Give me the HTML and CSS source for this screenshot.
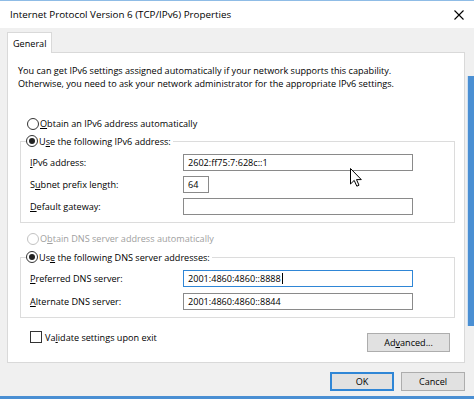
FILE: index.html
```html
<!DOCTYPE html>
<html lang="en">
<head>
    <meta charset="UTF-8">
    <title>Internet Protocol Version 6 (TCP/IPv6) Properties</title>
    <link rel="stylesheet" href="styles.css">
</head>
<body>
    <div class="window">
        <div class="titlebar">
            <span class="title">Internet Protocol Version 6 (TCP/IPv6) Properties</span>
            <svg class="close" width="10" height="10" viewBox="0 0 10 10">
                <path d="M0.5 0.5 L9.5 9.5 M9.5 0.5 L0.5 9.5" stroke="#000" stroke-width="1.1" fill="none"/>
            </svg>
        </div>

        <div class="dialog-body">
            <div class="tabs">
                <div class="tab">General</div>
            </div>

            <div class="panel">
                <p class="intro">
                    You can get IPv6 settings assigned automatically if your network supports this capability.<br>
                    Otherwise, you need to ask your network administrator for the appropriate IPv6 settings.
                </p>

                <div class="option first-option">
                    <span class="radio"></span>
                    <span><u>O</u>btain an IPv6 address automatically</span>
                </div>

                <fieldset class="group group-ip">
                    <legend class="option">
                        <span class="radio checked"></span>
                        <span>U<u>s</u>e the following IPv6 address:</span>
                    </legend>
                    <div class="field-row">
                        <span class="field-label"><u>I</u>Pv6 address:</span>
                        <div class="textbox">2602:ff75:7:628c::1</div>
                    </div>
                    <div class="field-row">
                        <span class="field-label">S<u>u</u>bnet prefix length:</span>
                        <div class="textbox short">64</div>
                    </div>
                    <div class="field-row">
                        <span class="field-label"><u>D</u>efault gateway:</span>
                        <div class="textbox"></div>
                    </div>
                </fieldset>

                <div class="option disabled dns-auto">
                    <span class="radio"></span>
                    <span>O<u>b</u>tain DNS server address automatically</span>
                </div>

                <fieldset class="group group-dns">
                    <legend class="option">
                        <span class="radio checked"></span>
                        <span>Us<u>e</u> the following DNS server addresses:</span>
                    </legend>
                    <div class="field-row">
                        <span class="field-label"><u>P</u>referred DNS server:</span>
                        <div class="textbox focused">2001:4860:4860::8888<span class="caret"></span></div>
                    </div>
                    <div class="field-row">
                        <span class="field-label"><u>A</u>lternate DNS server:</span>
                        <div class="textbox">2001:4860:4860::8844</div>
                    </div>
                </fieldset>

                <div class="panel-footer">
                    <div class="check-option">
                        <span class="checkbox"></span>
                        <span>Va<u>l</u>idate settings upon exit</span>
                    </div>
                    <button class="btn advanced">Ad<u>v</u>anced...</button>
                </div>
            </div>

            <div class="actions">
                <button class="btn default">OK</button>
                <button class="btn">Cancel</button>
            </div>
        </div>

        <!-- edge of the window behind this dialog -->
        <div class="behind-edge"></div>

        <svg class="cursor" width="12" height="19" viewBox="0 0 12 19">
            <path d="M0.5 0.5 L0.5 16 L4.2 12.4 L6.8 18.2 L9 17.2 L6.5 11.6 L11.3 11.6 Z" fill="#fff" stroke="#000" stroke-width="1" stroke-linejoin="miter"/>
        </svg>
    </div>
</body>
</html>
```

FILE: styles.css
```css
:root {
    --dialog-bg: #f0f0f0;
    --panel-border: #d9d9d9;
    --group-border: #dcdcdc;
    --text: #000000;
    --text-disabled: #a0a0a0;
    --input-border: #8a8a8a;
    --focus-blue: #2f86d6;
    --button-bg: #e1e1e1;
    --button-border: #adadad;
    --window-blue: #4a8fd3;
}

* {
    box-sizing: border-box;
}

body {
    margin: 0;
    width: 474px;
    height: 399px;
    overflow: hidden;
    font-family: "Open Sans", "Liberation Sans", sans-serif;
    font-size: 9.1px;
    color: var(--text);
}

u {
    text-decoration: underline;
    text-underline-offset: 1px;
}

.window {
    position: relative;
    height: 399px;
    display: flex;
    flex-direction: column;
    background: var(--dialog-bg);
    border-top: 1px solid #8fbce6;
    border-bottom: 3px solid var(--window-blue);
}

.titlebar {
    height: 27px;
    flex: none;
    background: #ffffff;
    display: flex;
    align-items: center;
    justify-content: space-between;
    padding: 0 10px 0 10px;
}

.title {
    font-size: 9.8px;
}

.dialog-body {
    flex: 1;
    padding: 4px 9px 0 7px;
}

.tabs {
    display: flex;
}

.tab {
    position: relative;
    z-index: 1;
    height: 21px;
    margin-bottom: -1px;
    padding: 0 5px;
    display: flex;
    align-items: center;
    background: #ffffff;
    border: 1px solid var(--panel-border);
    border-bottom: none;
}

.panel {
    background: #ffffff;
    border: 1px solid var(--panel-border);
    padding-bottom: 10px;
}

.intro {
    margin: 0;
    padding: 11px 10px 0;
    line-height: 13px;
}

/* radio rows */
.option {
    display: flex;
    align-items: center;
    gap: 1px;
    height: 13px;
    line-height: 13px;
    white-space: nowrap;
}

.first-option {
    margin: 27px 0 0 19px;
}

.dns-auto {
    margin: 9px 0 0 19px;
}

.radio {
    width: 12px;
    height: 12px;
    border: 1px solid #333333;
    border-radius: 50%;
    display: flex;
    align-items: center;
    justify-content: center;
    flex: none;
    background: #ffffff;
}

.radio.checked::after {
    content: "";
    width: 6px;
    height: 6px;
    border-radius: 50%;
    background: #222222;
}

.option.disabled {
    color: var(--text-disabled);
}

.option.disabled .radio {
    border-color: #c2c2c2;
}

/* group boxes */
.group {
    margin: 4px 9px 0 12px;
    padding: 6px 0 7px 9px;
    border: 1px solid var(--group-border);
    display: flex;
    flex-direction: column;
    gap: 5px;
    min-width: 0;
}

.group-dns {
    margin-top: 5px;
    gap: 6px;
}

.group legend {
    height: 14px;
    margin-left: -4px;
    padding: 0 2px 0 0;
}

.field-row {
    display: flex;
    align-items: center;
    height: 17px;
}

.field-label {
    width: 153px;
    flex: none;
}

.textbox {
    width: 230px;
    height: 17px;
    border: 1px solid var(--input-border);
    background: #ffffff;
    padding: 0 4px;
    display: flex;
    align-items: center;
}

.textbox.short {
    width: 26px;
}

.textbox.focused {
    border-color: var(--focus-blue);
}

.caret {
    width: 1px;
    height: 11px;
    margin-left: 1px;
    background: #000000;
}

/* footer of the tab page */
.panel-footer {
    display: flex;
    justify-content: space-between;
    align-items: flex-start;
    padding: 0 14px 0 22px;
}

.check-option {
    display: flex;
    align-items: center;
    gap: 3px;
    height: 12px;
    margin-top: 13px;
}

.checkbox {
    width: 12px;
    height: 12px;
    border: 1px solid #333333;
    background: #ffffff;
}

.btn {
    height: 19px;
    padding: 0;
    font-family: inherit;
    font-size: inherit;
    color: var(--text);
    background: var(--button-bg);
    border: 1px solid var(--button-border);
}

.advanced {
    width: 83px;
    margin-top: 15px;
}

.actions {
    display: flex;
    justify-content: flex-end;
    gap: 7px;
    margin-top: 9px;
}

.actions .btn {
    width: 64px;
}

.btn.default {
    border: 2px solid var(--focus-blue);
}

.behind-edge {
    position: absolute;
    top: 75px;
    right: 0;
    width: 7px;
    height: 250px;
    background: var(--window-blue);
    border-left: 1px solid #cfe1f2;
}

.cursor {
    position: absolute;
    left: 350px;
    top: 167px;
}
```
